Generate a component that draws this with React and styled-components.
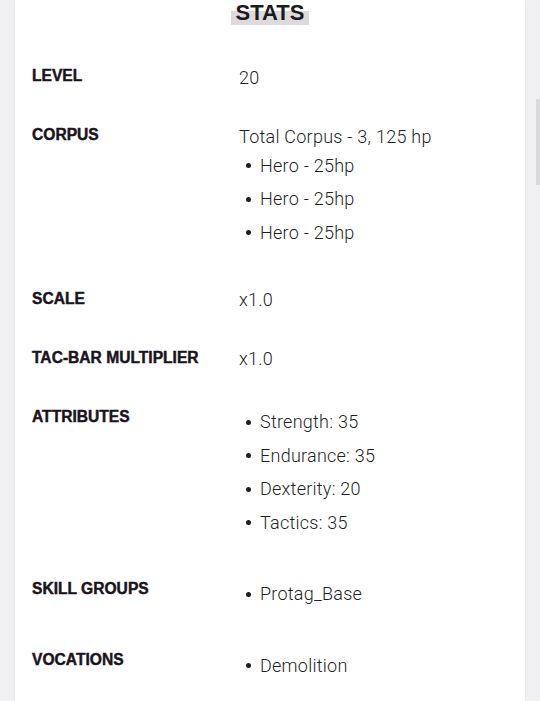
import React from "react";
import styled, { createGlobalStyle } from "styled-components";

const Global = createGlobalStyle`
  html, body {
    margin: 0;
    padding: 0;
    height: 701px;
    overflow: hidden;
    background: #f0eff1;
  }
  * { box-sizing: border-box; }
`;

const Page = styled.div`
  width: 540px;
  height: 701px;
  padding: 0 15px;
  position: relative;
`;

const Card = styled.main`
  background: #ffffff;
  height: 100%;
  padding: 0 17px;
  box-shadow: 0 0 3px rgba(0, 0, 0, 0.07);
`;

const TitleWrap = styled.h2`
  margin: 0 0 22.5px;
  text-align: center;
  font-family: "Liberation Sans", Arial, sans-serif;
  font-weight: 700;
  font-size: 22px;
  line-height: 25px;
  color: #1c1a1e;
`;

const Highlight = styled.span`
  padding: 0 5px;
  background: linear-gradient(transparent 45%, #dcdadd 45%);
`;

const Row = styled.section`
  display: grid;
  grid-template-columns: 207px 1fr;
  padding: 17px 0;
`;

const Label = styled.div`
  font-family: "Liberation Sans", Arial, sans-serif;
  font-weight: 700;
  font-size: 15.6px;
  line-height: 19px;
  padding-top: 1.5px;
  color: #1b1420;
  text-transform: uppercase;
  -webkit-text-stroke: 0.45px #1b1420;
`;

const Value = styled.div`
  font-family: Roboto, "Noto Sans", sans-serif;
  font-weight: 300;
  font-size: 18px;
  line-height: 25px;
  letter-spacing: 0.25px;
  color: #241f26;
`;

const List = styled.ul`
  list-style: none;
  margin: 0 0 4px;
  padding: 0;
`;

const Item = styled.li`
  display: flex;
  align-items: center;
  gap: 9px;
  padding: 4.25px 0 4.25px 7px;
`;

const Dot = styled.span`
  width: 5px;
  height: 5px;
  border-radius: 50%;
  background: #1f1b22;
  flex: none;
  margin-top: 1px;
`;

const Scrollbar = styled.div`
  position: absolute;
  right: 0;
  top: 99px;
  width: 4px;
  height: 86px;
  background: #d9d8da;
`;

const rows = [
  { label: "Level", text: "20" },
  {
    label: "Corpus",
    text: "Total Corpus - 3, 125 hp",
    items: ["Hero - 25hp", "Hero - 25hp", "Hero - 25hp"],
  },
  { label: "Scale", text: "x1.0" },
  { label: "Tac-Bar Multiplier", text: "x1.0" },
  {
    label: "Attributes",
    items: ["Strength: 35", "Endurance: 35", "Dexterity: 20", "Tactics: 35"],
  },
  { label: "Skill Groups", items: ["Protag_Base"] },
  { label: "Vocations", items: ["Demolition"] },
];

export default function App() {
  return (
    <>
      <Global />
      <Page>
        <Card>
          <TitleWrap>
            <Highlight>STATS</Highlight>
          </TitleWrap>
          {rows.map((r) => (
            <Row key={r.label}>
              <Label>{r.label}</Label>
              <Value>
                {r.text && <div>{r.text}</div>}
                {r.items && (
                  <List>
                    {r.items.map((it, i) => (
                      <Item key={i}>
                        <Dot />
                        {it}
                      </Item>
                    ))}
                  </List>
                )}
              </Value>
            </Row>
          ))}
        </Card>
        <Scrollbar />
      </Page>
    </>
  );
}
